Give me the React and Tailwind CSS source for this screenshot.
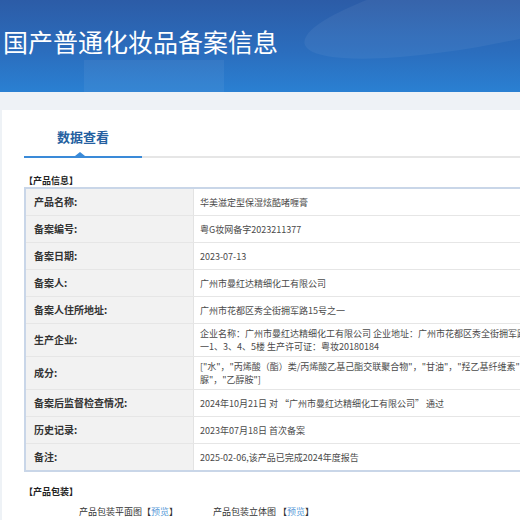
const rows = [
  { label: '产品名称:', value: ['华美滋定型保湿炫酷啫喱膏'] },
  { label: '备案编号:', value: ['粤G妆网备字2023211377'] },
  { label: '备案日期:', value: ['2023-07-13'] },
  { label: '备案人:', value: ['广州市曼红达精细化工有限公司'] },
  { label: '备案人住所地址:', value: ['广州市花都区秀全街拥军路15号之一'] },
  {
    label: '生产企业:',
    value: [
      '企业名称：广州市曼红达精细化工有限公司 企业地址：广州市花都区秀全街拥军路15号之',
      '一1、3、4、5楼 生产许可证：粤妆20180184',
    ],
  },
  {
    label: '成分:',
    value: [
      '["水"，"丙烯酸（酯）类/丙烯酸乙基己酯交联聚合物"，"甘油"，"羟乙基纤维素"，"双（羟甲基）咪唑烷基',
      '脲"，"乙醇胺"]',
    ],
  },
  { label: '备案后监督检查情况:', value: ['2024年10月21日 对 “广州市曼红达精细化工有限公司” 通过'] },
  { label: '历史记录:', value: ['2023年07月18日 首次备案'] },
  { label: '备注:', value: ['2025-02-06,该产品已完成2024年度报告'] },
]

function InfoRow({ row, last }) {
  return (
    <div className={`flex ${last ? '' : 'border-b border-[#e6e6e6]'}`}>
      <div className="w-[168px] shrink-0 bg-[#f2f2f2] border-r border-[#e3e3e3] flex items-center pl-[8px] text-[10px] leading-[14px] font-bold text-[#333]">
        {row.label}
      </div>
      <div className="flex-1 min-h-[26px] flex flex-col justify-center px-[6px] py-[3px] text-[9px] leading-[13px] text-[#4a4a4a] whitespace-nowrap">
        {row.value.map((line, i) => (
          <div key={i}>{line}</div>
        ))}
      </div>
    </div>
  )
}

export default function App() {
  return (
    <div className="w-[520px] h-[520px] overflow-hidden bg-[#eef2f6] font-['Noto_Sans_CJK_SC','Microsoft_YaHei',sans-serif]">
      <header className="relative h-[92px] overflow-hidden bg-[linear-gradient(180deg,#2c5ca7_0%,#2b6dbd_55%,#2a80d2_100%)]">
        <div className="absolute -top-[40px] left-[300px] w-[420px] h-[80px] rounded-[50%] bg-white/5 rotate-[-12deg]" />
        <div className="absolute top-[60px] left-[84px] w-[140px] h-[40px] bg-white/5" />
        <h1 className="relative pl-[3px] pt-[26px] text-[25px] leading-[30px] font-normal text-white">
          国产普通化妆品备案信息
        </h1>
      </header>

      <div className="h-[18px]" />

      <main className="ml-[2px] bg-white h-[410px] overflow-hidden">
        <div className="flex items-end pl-[22px]">
          <div className="relative w-[118px] shrink-0">
            <div className="pt-[17px] pb-[9px] text-center text-[13px] leading-[20px] font-bold text-[#2460a0]">
              数据查看
            </div>
            <div className="h-[2px] bg-[#3a8ad8]" />
            <div className="absolute left-[51px] bottom-[2px] w-0 h-0 border-l-[5px] border-r-[5px] border-b-[4px] border-l-transparent border-r-transparent border-b-[#3a8ad8]" />
          </div>
          <div className="flex-1 h-[2px] bg-[#e6e6e6]" />
        </div>

        <div className="pl-[22px] w-[800px]">
          <div className="mt-[16px] text-[9px] leading-[13px] font-bold text-[#222]">【产品信息】</div>
          <div className="border-2 border-[#c9d6e8] border-r-0">
            {rows.map((row, i) => (
              <InfoRow key={i} row={row} last={i === rows.length - 1} />
            ))}
          </div>

          <div className="mt-[14px] text-[9px] leading-[12px] font-bold text-[#222]">【产品包装】</div>
          <div className="mt-[8px] flex pl-[55px] gap-[35px] text-[9px] leading-[12px] text-[#333]">
            <span>
              产品包装平面图【<span className="text-[#5b9bd8]">预览</span>】
            </span>
            <span>
              产品包装立体图 【<span className="text-[#5b9bd8]">预览</span>】
            </span>
          </div>
        </div>
      </main>
    </div>
  )
}
